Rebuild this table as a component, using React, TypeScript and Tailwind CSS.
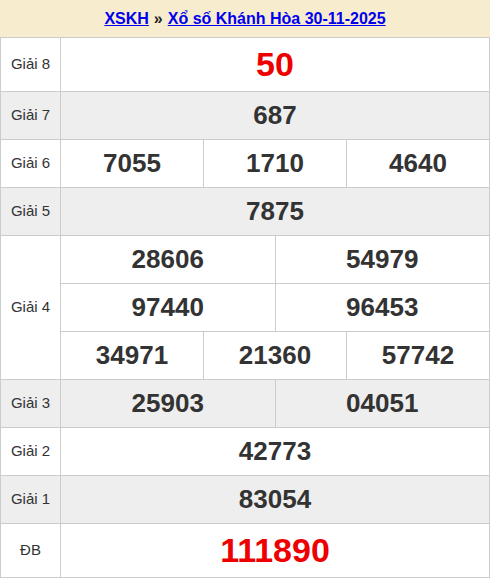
import React from 'react';

type Row = { label: string; nums: string[][]; big?: boolean; alt?: boolean };

const rows: Row[] = [
  { label: 'Giải 8', nums: [['50']], big: true },
  { label: 'Giải 7', nums: [['687']], alt: true },
  { label: 'Giải 6', nums: [['7055', '1710', '4640']] },
  { label: 'Giải 5', nums: [['7875']], alt: true },
  { label: 'Giải 4', nums: [['28606', '54979'], ['97440', '96453'], ['34971', '21360', '57742']] },
  { label: 'Giải 3', nums: [['25903', '04051']], alt: true },
  { label: 'Giải 2', nums: [['42773']] },
  { label: 'Giải 1', nums: [['83054']], alt: true },
  { label: 'ĐB', nums: [['111890']], big: true },
];

function App() {
  return (
    <div className="w-[490px] bg-white font-['Liberation_Sans',Arial,sans-serif]">
      <div className="h-[37px] bg-[#f7ecce] flex items-center justify-center text-[16px] font-bold">
        <a href="#" className="text-[#0000ee] underline">XSKH</a>
        <span className="text-[#222] mx-[5px]">»</span>
        <a href="#" className="text-[#0000ee] underline">Xổ số Khánh Hòa 30-11-2025</a>
      </div>
      <table className="w-full table-fixed border-collapse">
        <colgroup>
          <col className="w-[60px]" />
          <col /><col /><col /><col /><col /><col />
        </colgroup>
        <tbody>
          {rows.map((row) =>
            row.nums.map((line, i) => (
              <tr key={row.label + i} className={row.alt ? 'bg-[#eeeeee]' : 'bg-white'}>
                {i === 0 && (
                  <td
                    rowSpan={row.nums.length}
                    className="border border-[#cccccc] text-center text-[15px] text-[#333] p-0"
                  >
                    {row.label}
                  </td>
                )}
                {line.map((n) => (
                  <td
                    key={n}
                    colSpan={6 / line.length}
                    className={`border border-[#cccccc] text-center font-bold p-0 ${
                      row.big ? 'h-[54px] text-[34px] text-[#ee0000]' : 'h-[48px] text-[26px] text-[#333]'
                    }`}
                  >
                    {n}
                  </td>
                ))}
              </tr>
            ))
          )}
        </tbody>
      </table>
    </div>
  );
}

export default App;
